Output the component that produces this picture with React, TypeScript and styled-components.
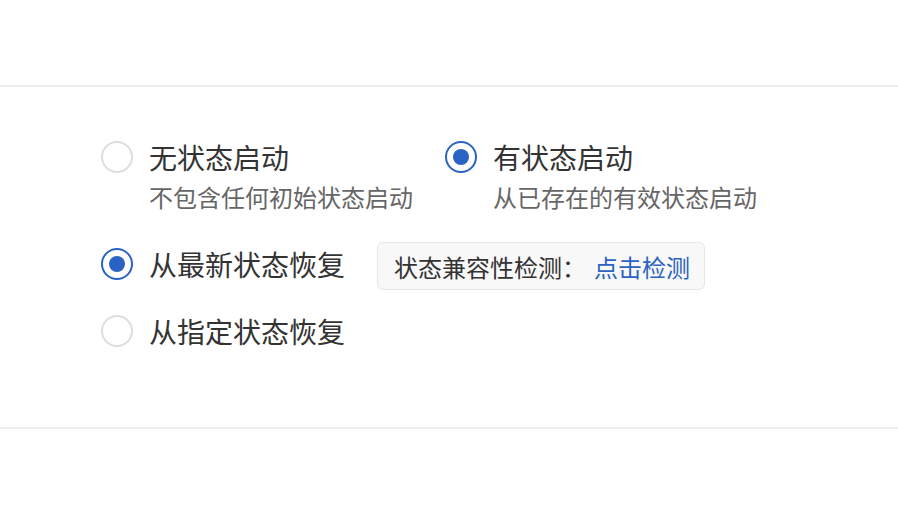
import React from "react";
import styled, { createGlobalStyle } from "styled-components";

const GlobalStyle = createGlobalStyle`
  html, body {
    margin: 0;
    padding: 0;
    background: #ffffff;
  }
  body {
    font-family: "Noto Sans CJK SC", "Noto Sans", sans-serif;
    color: #333333;
  }
`;

const Page = styled.div`
  width: 898px;
  height: 512px;
  padding-top: 85px;
  box-sizing: border-box;
  background: #ffffff;
`;

const Section = styled.section`
  border-top: 2px solid #eeeeee;
  border-bottom: 2px solid #eeeeee;
  padding: 50px 0 0 101px;
  box-sizing: border-box;
  height: 344px;
`;

const Row = styled.div<{ $top?: number }>`
  display: flex;
  align-items: flex-start;
  gap: 32px;
  margin-top: ${(p) => p.$top ?? 0}px;
`;

const Option = styled.label<{ $offset?: number }>`
  display: flex;
  align-items: flex-start;
  gap: 16px;
  margin-top: ${(p) => p.$offset ?? 0}px;
  cursor: pointer;
`;

const Radio = styled.span<{ $checked?: boolean }>`
  flex: none;
  width: 32px;
  height: 32px;
  margin-top: 4px;
  box-sizing: border-box;
  border-radius: 50%;
  border: 2px solid ${(p) => (p.$checked ? "#2b63c3" : "#dddddd")};
  display: flex;
  align-items: center;
  justify-content: center;
  &::after {
    content: "";
    display: ${(p) => (p.$checked ? "block" : "none")};
    width: 16px;
    height: 16px;
    border-radius: 50%;
    background: #2b63c3;
  }
`;

const Texts = styled.div`
  display: flex;
  flex-direction: column;
`;

const Title = styled.div`
  font-size: 28px;
  line-height: 40px;
  color: #333333;
  white-space: nowrap;
`;

const Desc = styled.div`
  font-size: 24px;
  line-height: 34px;
  margin-top: 3px;
  color: #666666;
  white-space: nowrap;
`;

const CheckBox = styled.div`
  display: flex;
  align-items: center;
  gap: 8px;
  height: 48px;
  box-sizing: border-box;
  margin-top: -1px;
  padding: 0 14px 0 16px;
  background: #f8f8f8;
  border: 1px solid #e6e6e6;
  border-radius: 6px;
  font-size: 24px;
  color: #333333;
  white-space: nowrap;
`;

const Link = styled.span`
  color: #2b63c3;
  cursor: pointer;
`;

export default function App() {
  return (
    <>
      <GlobalStyle />
      <Page>
        <Section>
          <Row>
            <Option>
              <Radio />
              <Texts>
                <Title>无状态启动</Title>
                <Desc>不包含任何初始状态启动</Desc>
              </Texts>
            </Option>
            <Option>
              <Radio $checked />
              <Texts>
                <Title>有状态启动</Title>
                <Desc>从已存在的有效状态启动</Desc>
              </Texts>
            </Option>
          </Row>
          <Row $top={29}>
            <Option $offset={1}>
              <Radio $checked />
              <Title>从最新状态恢复</Title>
            </Option>
            <CheckBox>
              <span>状态兼容性检测：</span>
              <Link>点击检测</Link>
            </CheckBox>
          </Row>
          <Row $top={21}>
            <Option>
              <Radio />
              <Title>从指定状态恢复</Title>
            </Option>
          </Row>
        </Section>
      </Page>
    </>
  );
}
